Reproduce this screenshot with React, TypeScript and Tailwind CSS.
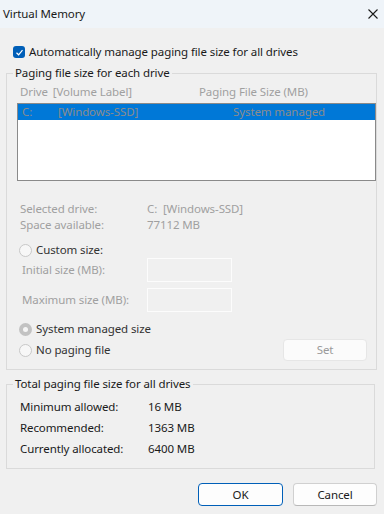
export default function App() {
  return (
    <div className="flex h-[514px] w-[384px] flex-col overflow-hidden bg-[#f0f0f0] font-['Noto_Sans',sans-serif] text-[11.5px] leading-[16px] tracking-[-0.1px] text-[#1a1a1a]">
      {/* title bar */}
      <div className="flex h-[28px] shrink-0 items-center justify-between bg-[#eff4f9] pl-[3px] pr-[6px]">
        <span className="text-[#1a1a1a]">Virtual Memory</span>
        <svg width="10" height="10" viewBox="0 0 10 10" className="text-[#1a1a1a]">
          <path d="M0.5 0.5 L9.5 9.5 M9.5 0.5 L0.5 9.5" stroke="currentColor" strokeWidth="1.1" fill="none" />
        </svg>
      </div>

      {/* auto manage */}
      <div className="mt-[16px] flex h-[16px] items-center gap-[4px] pl-[13px]">
        <span className="flex h-[12px] w-[12px] items-center justify-center rounded-[3px] bg-[#005fb8]">
          <svg width="9" height="9" viewBox="0 0 9 9">
            <path d="M1.5 4.8 L3.6 6.8 L7.5 2.2" stroke="white" strokeWidth="1.2" fill="none" />
          </svg>
        </span>
        <span>Automatically manage paging file size for all drives</span>
      </div>

      {/* per drive group */}
      <fieldset className="ml-[6px] mt-[5px] w-[369px] border border-[#dadada] pb-[8px]">
        <legend className="ml-[6px] px-[2px] leading-[16px]">Paging file size for each drive</legend>

        <div className="mt-[3px] flex h-[16px] items-center pl-[13px] text-[#a0a0a0]">
          <span className="w-[179px]">
            Drive <span className="ml-[2px]">[Volume Label]</span>
          </span>
          <span>Paging File Size (MB)</span>
        </div>

        <div className="ml-[10px] mt-[3px] h-[78px] w-[359px] border border-[#8a8a8a] bg-white">
          <div className="flex h-[16px] items-center bg-[#0078d7] pl-[4px] text-[#8c8c8c]">
            <span className="w-[36px]">C:</span>
            <span className="w-[175px]">[Windows-SSD]</span>
            <span>System managed</span>
          </div>
        </div>

        <div className="mt-[20px] flex h-[16px] items-center pl-[13px] text-[#a0a0a0]">
          <span className="w-[127px]">Selected drive:</span>
          <span>C:&nbsp; [Windows-SSD]</span>
        </div>
        <div className="flex h-[16px] items-center pl-[13px] text-[#a0a0a0]">
          <span className="w-[127px]">Space available:</span>
          <span>77112 MB</span>
        </div>

        <div className="mt-[9px] flex h-[16px] items-center gap-[4px] pl-[12px] text-[#333333]">
          <span className="h-[13px] w-[13px] rounded-full border border-[#c8c8c8] bg-[#f7f7f7]" />
          <span>Custom size:</span>
        </div>

        <div className="flex h-[24px] items-center pl-[15px] text-[#a0a0a0]">
          <span className="w-[125px]">Initial size (MB):</span>
          <span className="h-[24px] w-[85px] border border-[#fcfcfc]" />
        </div>
        <div className="mt-[6px] flex h-[24px] items-center pl-[15px] text-[#a0a0a0]">
          <span className="w-[125px]">Maximum size (MB):</span>
          <span className="h-[24px] w-[85px] border border-[#fcfcfc]" />
        </div>

        <div className="mt-[9px] flex h-[16px] items-center gap-[4px] pl-[12px] text-[#333333]">
          <span className="flex h-[13px] w-[13px] items-center justify-center rounded-full bg-[#c2c2c2]">
            <span className="h-[5px] w-[5px] rounded-full bg-[#f5f5f5]" />
          </span>
          <span>System managed size</span>
        </div>

        <div className="mt-[2px] flex h-[22px] items-center pl-[12px] pr-[8px] text-[#333333]">
          <span className="h-[13px] w-[13px] rounded-full border border-[#c8c8c8] bg-[#f7f7f7]" />
          <span className="ml-[4px]">No paging file</span>
          <button
            type="button"
            disabled
            className="ml-auto mr-[1px] h-[22px] w-[84px] shrink-0 rounded-[4px] border border-[#e6e6e6] bg-[#fbfbfb] text-[#9a9a9a]"
          >
            Set
          </button>
        </div>
      </fieldset>

      {/* totals group */}
      <fieldset className="ml-[6px] mt-[6px] w-[369px] border border-[#dadada] pb-[11px]">
        <legend className="ml-[6px] px-[2px] leading-[16px]">Total paging file size for all drives</legend>
        <div className="mt-[7px] flex flex-col gap-[5px] pl-[13px]">
          <div className="flex h-[16px] items-center">
            <span className="w-[128px]">Minimum allowed:</span>
            <span>16 MB</span>
          </div>
          <div className="flex h-[16px] items-center">
            <span className="w-[128px]">Recommended:</span>
            <span>1363 MB</span>
          </div>
          <div className="flex h-[16px] items-center">
            <span className="w-[128px]">Currently allocated:</span>
            <span>6400 MB</span>
          </div>
        </div>
      </fieldset>

      {/* buttons */}
      <div className="mt-[14px] flex justify-end gap-[10px] pr-[7px]">
        <button
          type="button"
          className="h-[23px] w-[85px] rounded-[4px] border border-[#005fb8] bg-[#fdfdfd] text-[#1a1a1a]"
        >
          OK
        </button>
        <button
          type="button"
          className="h-[23px] w-[84px] rounded-[4px] border border-[#d0d0d0] border-b-[#b8b8b8] bg-[#fdfdfd] text-[#1a1a1a]"
        >
          Cancel
        </button>
      </div>
    </div>
  );
}
